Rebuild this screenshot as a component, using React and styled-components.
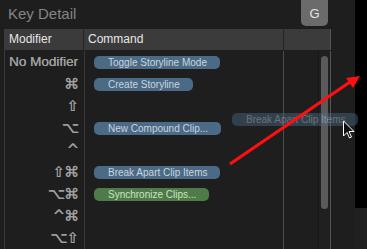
import React from "react";
import styled, { createGlobalStyle } from "styled-components";

const Global = createGlobalStyle`
  html, body { margin: 0; padding: 0; background: #1e1e1e; overflow: hidden; }
  body { font-family: "Liberation Sans", Arial, sans-serif; }
`;

const Screen = styled.div`
  position: relative;
  width: 367px;
  height: 249px;
  display: flex;
  overflow: hidden;
  background: #1e1e1e;
`;

const Panel = styled.div`
  width: 355px;
  display: flex;
  flex-direction: column;
`;

const Side = styled.div`
  width: 12px;
  display: flex;
  flex-direction: column;
`;

const SideBlock = styled.div`
  height: ${(p) => p.$h}px;
  flex: ${(p) => (p.$h ? "none" : "1")};
  background: ${(p) => p.$bg};
`;

const TitleBar = styled.div`
  height: 30px;
  display: flex;
  align-items: flex-start;
  justify-content: space-between;
  padding: 0 27px 0 8px;
`;

const Title = styled.div`
  color: #858585;
  font-size: 15px;
  line-height: 16px;
  margin-top: 6px;
`;

const KeyCap = styled.div`
  width: 27px;
  height: 26px;
  background: #6b6b6b;
  border-radius: 0 0 5px 5px;
  color: #e4e4e4;
  font-size: 13px;
  display: flex;
  align-items: center;
  justify-content: center;
`;

const Table = styled.div`
  margin-left: 4px;
  width: 326px;
  flex: 1;
  display: flex;
  flex-direction: column;
  border-left: 1px solid #3a3a3a;
`;

const Header = styled.div`
  height: 21px;
  display: grid;
  grid-template-columns: 79px 200px 46px;
  background: #3b3b3b;
  border-right: 1px solid #555;
`;

const HeadCell = styled.div`
  color: #e6e6e6;
  font-size: 12px;
  line-height: 21px;
  padding-left: 4px;
  border-right: ${(p) => (p.$last ? "none" : "1px solid #262626")};
`;

const Body = styled.div`
  flex: 1;
  display: flex;
  padding-top: 1px;
`;

const Rows = styled.div`
  width: 278px;
  display: grid;
  grid-template-columns: 79px 1fr;
  grid-auto-rows: 22px;
  border-right: 1px solid #4c4c4c;
  background: linear-gradient(to right, transparent 79px, #3a3a3a 79px, #3a3a3a 80px, transparent 80px);
`;

const Mod = styled.div`
  color: #a0a0a0;
  font-size: ${(p) => (p.$sym ? "15px" : "13.5px")};
  font-family: ${(p) => (p.$sym ? '"DejaVu Sans", sans-serif' : '"Liberation Sans", Arial, sans-serif')};
  text-shadow: ${(p) => (p.$sym ? "0.3px 0 0 #a0a0a0" : "0.2px 0 0 #a0a0a0")};
  letter-spacing: ${(p) => (p.$sym ? "-1px" : "0")};
  text-align: right;
  padding-right: 6px;
  line-height: 22px;
  white-space: nowrap;
`;

const CmdCell = styled.div`
  display: flex;
  align-items: center;
  padding-left: 10px;
`;

const Pill = styled.div`
  height: 13px;
  padding: 0 13px 0 14px;
  border-radius: 5px;
  background: ${(p) => (p.$green ? "#4e7b47" : "#4b6a86")};
  color: ${(p) => (p.$green ? "#d0e2c8" : "#c9d5df")};
  font-size: 10px;
  line-height: 13px;
  white-space: nowrap;
  opacity: ${(p) => (p.$ghost ? 0.45 : 1)};
`;

const Extra = styled.div`
  width: 47px;
  display: flex;
  justify-content: flex-end;
`;

const Track = styled.div`
  width: 13px;
  border-left: 1px solid #161616;
  border-right: 1px solid #555;
  background: #202020;
  padding: 5px 2px 0 2px;
  box-sizing: border-box;
`;

const Thumb = styled.div`
  height: 153px;
  border-radius: 4px;
  background: #5a5a5a;
`;

const Ghost = styled.div`
  position: absolute;
  left: 232px;
  top: 113px;
`;

const Overlay = styled.svg`
  position: absolute;
  left: 0;
  top: 0;
  pointer-events: none;
`;

const rows = [
  { m: "No Modifier", c: "Toggle Storyline Mode" },
  { m: "⌘", s: true, c: "Create Storyline" },
  { m: "⇧", s: true },
  { m: "⌥", s: true, c: "New Compound Clip..." },
  { m: "^", s: true },
  { m: "⇧⌘", s: true, c: "Break Apart Clip Items" },
  { m: "⌥⌘", s: true, c: "Synchronize Clips...", g: true },
  { m: "^⌘", s: true },
  { m: "⌥⇧", s: true },
];

export default function App() {
  return (
    <Screen>
      <Global />
      <Panel>
        <TitleBar>
          <Title>Key Detail</Title>
          <KeyCap>G</KeyCap>
        </TitleBar>
        <Table>
          <Header>
            <HeadCell>Modifier</HeadCell>
            <HeadCell>Command</HeadCell>
            <HeadCell $last />
          </Header>
          <Body>
            <Rows>
              {rows.map((r, i) => (
                <React.Fragment key={i}>
                  <Mod $sym={r.s}>{r.m}</Mod>
                  <CmdCell>{r.c && <Pill $green={r.g}>{r.c}</Pill>}</CmdCell>
                </React.Fragment>
              ))}
            </Rows>
            <Extra>
              <Track>
                <Thumb />
              </Track>
            </Extra>
          </Body>
        </Table>
      </Panel>
      <Side>
        <SideBlock $h={208} $bg="#000" />
        <SideBlock $bg="#202020" />
      </Side>
      <Ghost>
        <Pill $ghost>Break Apart Clip Items</Pill>
      </Ghost>
      <Overlay width="367" height="249" viewBox="0 0 367 249">
        <line x1="230" y1="164" x2="350" y2="82" stroke="#ff1010" strokeWidth="3.2" />
        <polygon points="360,76 346,78 353,88" fill="#ff1010" />
        <path
          d="M343.5 121 L343.5 136 L347 132.5 L349.5 138 L351.5 137 L349 131.5 L354 131.5 Z"
          fill="#111"
          stroke="#fff"
          strokeWidth="1"
        />
      </Overlay>
    </Screen>
  );
}
